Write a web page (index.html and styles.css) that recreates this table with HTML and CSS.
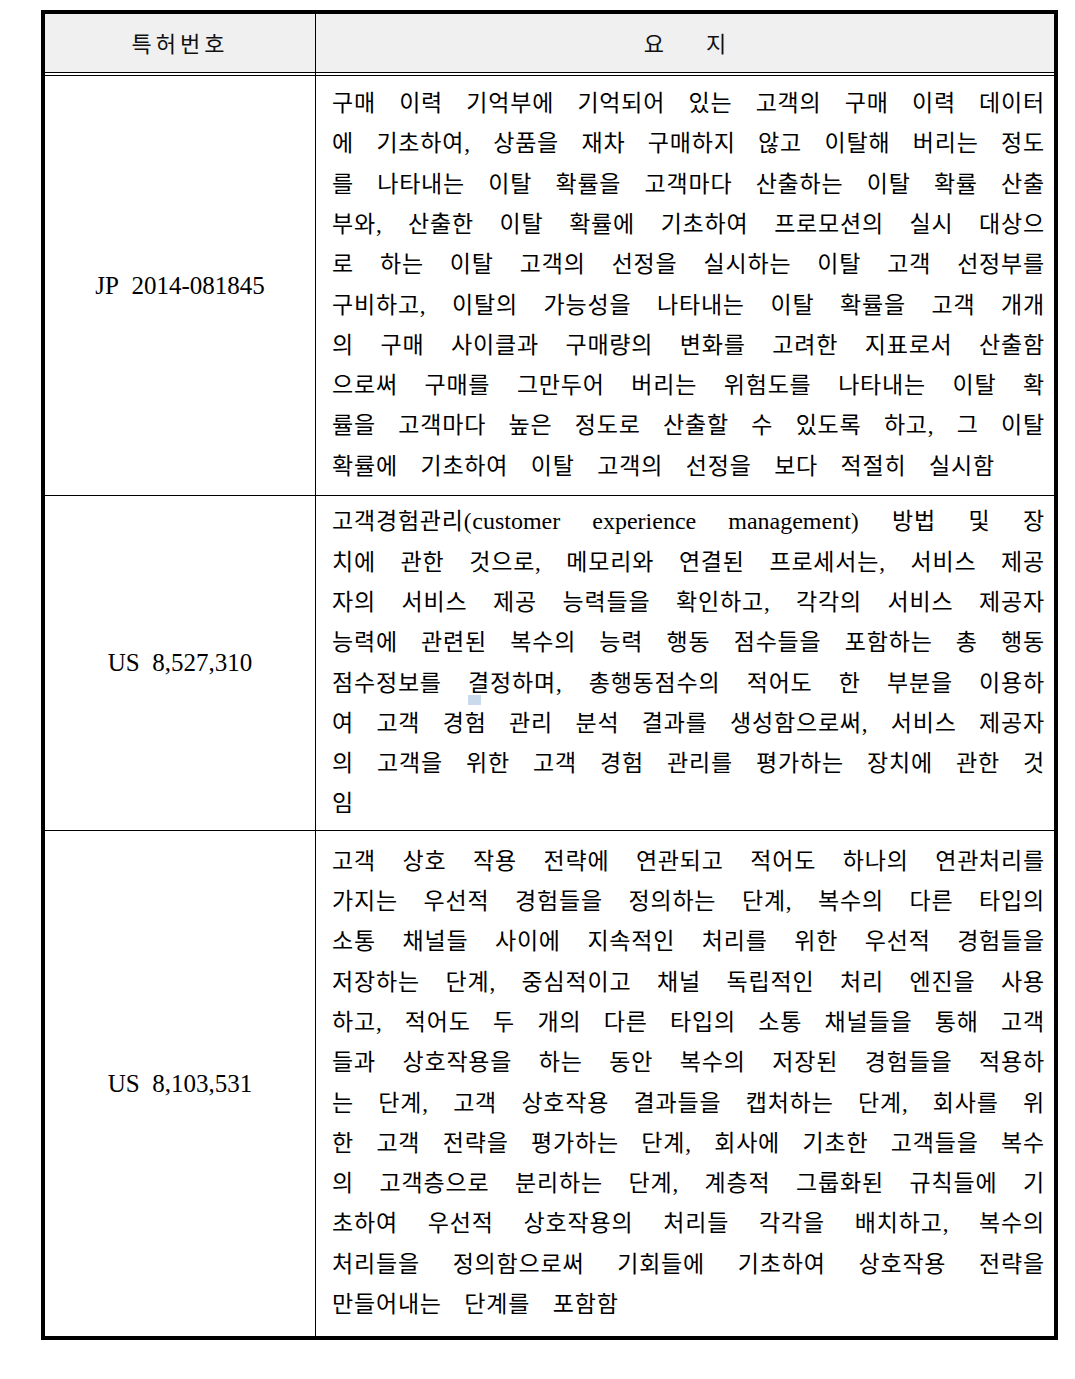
FILE: index.html
```html
<!DOCTYPE html>
<html lang="ko">
<head>
<meta charset="utf-8">
<title>특허 요지</title>
<link rel="stylesheet" href="styles.css">
</head>
<body>
<div class="tbl">
  <div class="cell head">특허번호</div>
  <div class="cell head"><span class="hw">요</span><span class="hw">지</span></div>

  <div class="cell num r1">JP&nbsp; 2014-081845</div>
  <div class="cell txt r1">
    <div class="para">
      <div class="ln">구매 이력 기억부에 기억되어 있는 고객의 구매 이력 데이터</div>
      <div class="ln">에 기초하여, 상품을 재차 구매하지 않고 이탈해 버리는 정도</div>
      <div class="ln">를 나타내는 이탈 확률을 고객마다 산출하는 이탈 확률 산출</div>
      <div class="ln">부와, 산출한 이탈 확률에 기초하여 프로모션의 실시 대상으</div>
      <div class="ln">로 하는 이탈 고객의 선정을 실시하는 이탈 고객 선정부를</div>
      <div class="ln">구비하고, 이탈의 가능성을 나타내는 이탈 확률을 고객 개개</div>
      <div class="ln">의 구매 사이클과 구매량의 변화를 고려한 지표로서 산출함</div>
      <div class="ln">으로써 구매를 그만두어 버리는 위험도를 나타내는 이탈 확</div>
      <div class="ln">률을 고객마다 높은 정도로 산출할 수 있도록 하고, 그 이탈</div>
      <div class="ln last">확률에 기초하여 이탈 고객의 선정을 보다 적절히 실시함</div>
    </div>
  </div>

  <div class="cell num r2">US&nbsp; 8,527,310</div>
  <div class="cell txt r2">
    <span class="mark"></span>
    <div class="para">
      <div class="ln">고객경험관리(<span class="en">customer experience management</span>) 방법 및 장</div>
      <div class="ln">치에 관한 것으로, 메모리와 연결된 프로세서는, 서비스 제공</div>
      <div class="ln">자의 서비스 제공 능력들을 확인하고, 각각의 서비스 제공자</div>
      <div class="ln">능력에 관련된 복수의 능력 행동 점수들을 포함하는 총 행동</div>
      <div class="ln">점수정보를 결정하며, 총행동점수의 적어도 한 부분을 이용하</div>
      <div class="ln">여 고객 경험 관리 분석 결과를 생성함으로써, 서비스 제공자</div>
      <div class="ln">의 고객을 위한 고객 경험 관리를 평가하는 장치에 관한 것</div>
      <div class="ln last">임</div>
    </div>
  </div>

  <div class="cell num r3">US&nbsp; 8,103,531</div>
  <div class="cell txt r3">
    <div class="para">
      <div class="ln">고객 상호 작용 전략에 연관되고 적어도 하나의 연관처리를</div>
      <div class="ln">가지는 우선적 경험들을 정의하는 단계, 복수의 다른 타입의</div>
      <div class="ln">소통 채널들 사이에 지속적인 처리를 위한 우선적 경험들을</div>
      <div class="ln">저장하는 단계, 중심적이고 채널 독립적인 처리 엔진을 사용</div>
      <div class="ln">하고, 적어도 두 개의 다른 타입의 소통 채널들을 통해 고객</div>
      <div class="ln">들과 상호작용을 하는 동안 복수의 저장된 경험들을 적용하</div>
      <div class="ln">는 단계, 고객 상호작용 결과들을 캡처하는 단계, 회사를 위</div>
      <div class="ln">한 고객 전략을 평가하는 단계, 회사에 기초한 고객들을 복수</div>
      <div class="ln">의 고객층으로 분리하는 단계, 계층적 그룹화된 규칙들에 기</div>
      <div class="ln">초하여 우선적 상호작용의 처리들 각각을 배치하고, 복수의</div>
      <div class="ln">처리들을 정의함으로써 기회들에 기초하여 상호작용 전략을</div>
      <div class="ln last">만들어내는 단계를 포함함</div>
    </div>
  </div>
</div>
</body>
</html>
```

FILE: styles.css
```css
html, body {
  margin: 0;
  padding: 0;
  background: #fff;
}

.tbl {
  margin: 10px 0 0 41px;
  width: max-content;
  display: grid;
  grid-template-columns: 270px 738px;
  grid-template-rows: 61px 419px 334px 505px;
  gap: 1px;
  background: #000;
  border: 4px solid #000;
  color: #000;
  font-family: "Liberation Serif", "Noto Sans CJK KR", serif;
}

.cell {
  background: #fff;
  display: flex;
  align-items: center;
  box-sizing: border-box;
}

.head {
  background: linear-gradient(#f0f0f0 0, #f0f0f0 58px, #000 58px, #000 59px, #fff 59px);
  justify-content: center;
  padding-bottom: 6px;
  font-family: "Noto Sans CJK KR", sans-serif;
  font-size: 22px;
  letter-spacing: 4px;
  color: #111;
}

.hw {
  margin: 0 21px;
  letter-spacing: 0;
}

.num {
  justify-content: center;
  font-family: "Liberation Serif", serif;
  font-size: 25px;
}

.txt {
  position: relative;
  padding: 0 9px 0 16px;
  font-size: 23px;
  line-height: 40.3px;
  letter-spacing: 0.8px;
  word-spacing: 4px;
}

.para {
  width: 100%;
}

.ln {
  white-space: nowrap;
  text-align: justify;
  text-align-last: justify;
}

.ln.last {
  text-align-last: left;
  word-spacing: 16px;
}

.en {
  font-size: 24px;
  letter-spacing: 0;
}

.mark {
  position: absolute;
  left: 152px;
  top: 199px;
  width: 13px;
  height: 10px;
  background: #c8daec;
}
```
